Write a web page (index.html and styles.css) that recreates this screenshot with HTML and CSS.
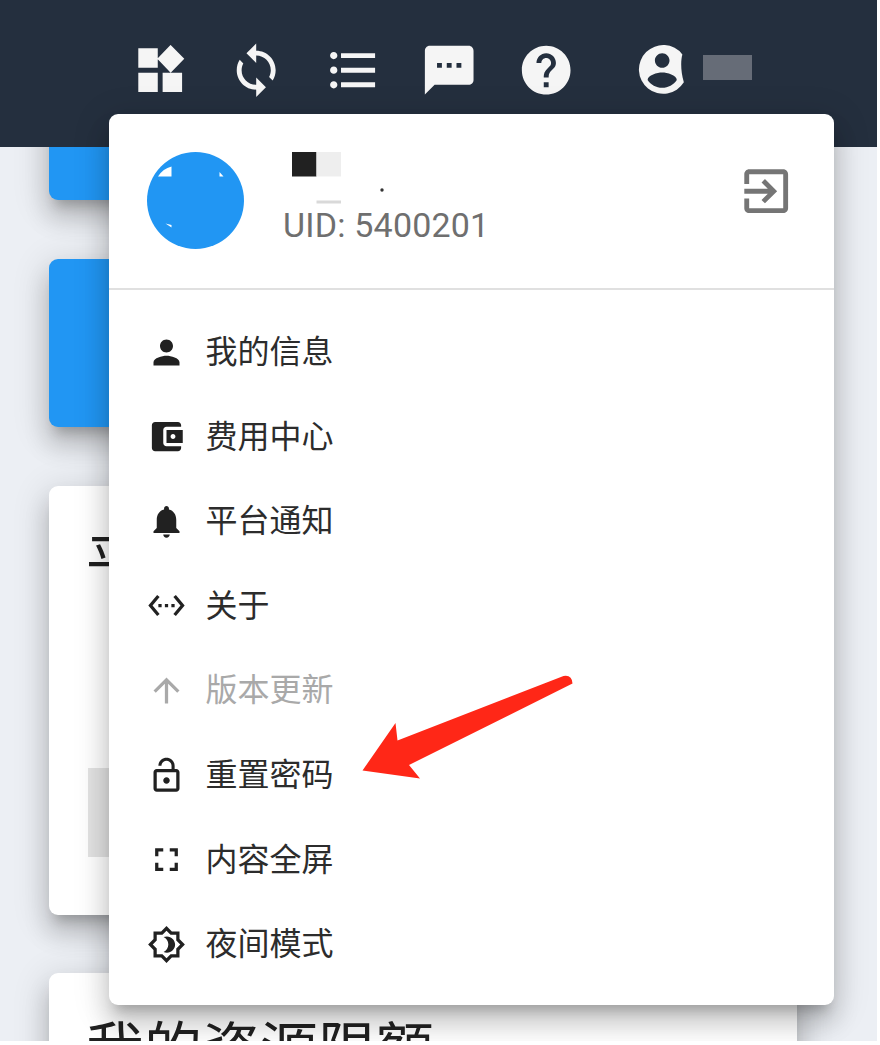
FILE: index.html
```html
<!DOCTYPE html>
<html lang="zh-CN">
<head>
<meta charset="utf-8">
<title>账户菜单</title>
<link rel="stylesheet" href="styles.css">
</head>
<body>
<div class="app">
  <header class="topbar">
    <nav class="actions">
      <svg class="icon" viewBox="0 0 24 24"><path d="M13 13v8h8v-8h-8zM3 21h8v-8H3v8zM3 3v8h8V3H3zm13.220-1.310L10.800 7.340 16.300 13l5.600-5.660-5.600-5.650z"/></svg>
      <svg class="icon" viewBox="0 0 24 24"><path d="M12 4V1L8 5l4 4V6c3.310 0 6 2.690 6 6 0 1.010-.250 1.970-.7 2.800l1.460 1.460C19.540 15.030 20 13.570 20 12c0-4.420-3.580-8-8-8zm0 14c-3.310 0-6-2.690-6-6 0-1.010.250-1.970.7-2.800L5.240 7.740C4.460 8.970 4 10.430 4 12c0 4.420 3.580 8 8 8v3l4-4-4-4v3z"/></svg>
      <svg class="icon" viewBox="0 0 24 24"><path d="M4 10.500c-.830 0-1.500.670-1.500 1.500s.670 1.500 1.500 1.500 1.500-.670 1.500-1.500-.670-1.500-1.500-1.500zm0-6c-.830 0-1.500.670-1.500 1.500S3.170 7.500 4 7.500 5.500 6.830 5.500 6 4.830 4.500 4 4.500zm0 12c-.830 0-1.500.680-1.500 1.500s.680 1.500 1.500 1.500 1.500-.680 1.500-1.500-.670-1.500-1.500-1.500zM7 19h14v-2H7v2zm0-6h14v-2H7v2zm0-8v2h14V5H7z"/></svg>
      <svg class="icon" viewBox="0 0 24 24"><path d="M20 2H4c-1.100 0-1.990.9-1.990 2L2 22l4-4h14c1.100 0 2-.9 2-2V4c0-1.100-.9-2-2-2zM9 11H7V9h2v2zm4 0h-2V9h2v2zm4 0h-2V9h2v2z"/></svg>
      <svg class="icon" viewBox="0 0 24 24"><path d="M12 2C6.480 2 2 6.480 2 12s4.480 10 10 10 10-4.480 10-10S17.520 2 12 2zm1 17h-2v-2h2v2zm2.070-7.750l-.9.920C13.450 12.900 13 13.500 13 15h-2v-.5c0-1.100.450-2.100 1.170-2.830l1.240-1.260c.370-.360.590-.860.590-1.410 0-1.100-.9-2-2-2s-2 .9-2 2H8c0-2.210 1.790-4 4-4s4 1.790 4 4c0 .880-.360 1.680-.930 2.250z"/></svg>
    </nav>
    <div class="account">
      <svg class="icon" viewBox="0 0 24 24"><path d="M20.300 5.500C19.550 8 19.600 12.500 20.900 17A10 10 0 1 1 20.300 5.500zM12 5c-1.660 0-3 1.340-3 3s1.340 3 3 3 3-1.340 3-3-1.340-3-3-3zm0 14.200c2.500 0 4.710-1.280 6-3.220-.03-1.990-4.010-3.080-6-3.080-2 0-5.970 1.090-6 3.080 1.290 1.940 3.500 3.220 6 3.220z" fill-rule="evenodd"/></svg>
      <span class="account-name"></span>
    </div>
  </header>

  <main class="page">
    <section class="card card-blue card-first"></section>
    <section class="card card-blue card-second"></section>
    <section class="card card-news">
      <h2 class="card-title">平</h2>
      <div class="card-block"></div>
    </section>
    <section class="card card-quota">
      <h2 class="card-title">我的资源限额</h2>
    </section>
  </main>

  <div class="menu">
    <div class="profile">
      <svg class="avatar" viewBox="0 0 97 97"><circle cx="48.500" cy="48.500" r="48.500" fill="#2196f3"/><path d="M11 24.500Q16 16.500 24.500 14.500V24.500zM72.500 20L76.500 24.500H72.500zM18.500 71.500L24.500 73V75.500z" fill="#fff"/></svg>
      <div class="identity">
        <div class="name">
          <svg class="name-mask" viewBox="0 0 110 56"><path fill="#212121" d="M9 2h24.500v24.500H9z"/><path fill="#eee" d="M33.500 2H58v24.500H33.500z"/><path fill="#d9d9d9" d="M33.500 50.500H58v3H33.500z"/><circle cx="99" cy="40" r="1.700" fill="#333"/></svg>
        </div>
        <div class="uid">UID: 5400201</div>
      </div>
      <svg class="icon logout" viewBox="0 0 24 24"><path d="M10.090 15.590L11.500 17l5-5-5-5-1.410 1.410L12.670 11H3v2h9.670l-2.580 2.590zM19 3H5c-1.110 0-2 .9-2 2v4h2V5h14v14H5v-4H3v4c0 1.100.890 2 2 2h14c1.100 0 2-.9 2-2V5c0-1.100-.9-2-2-2z"/></svg>
    </div>
    <ul class="items">
      <li class="item"><svg viewBox="0 0 24 24"><path d="M12 12c2.210 0 4-1.790 4-4s-1.790-4-4-4-4 1.790-4 4 1.790 4 4 4zm0 2c-2.670 0-8 1.340-8 4v2h16v-2c0-2.660-5.330-4-8-4z"/></svg><span>我的信息</span></li>
      <li class="item"><svg viewBox="0 0 24 24"><path d="M21 18v1c0 1.100-.9 2-2 2H5c-1.110 0-2-.9-2-2V5c0-1.100.890-2 2-2h14c1.100 0 2 .9 2 2v1h-9c-1.110 0-2 .9-2 2v8c0 1.100.890 2 2 2h9zm-9-2h10V8H12v8zm4-2.500c-.830 0-1.500-.670-1.500-1.500s.670-1.500 1.500-1.500 1.500.670 1.500 1.500-.670 1.500-1.500 1.500z"/></svg><span>费用中心</span></li>
      <li class="item"><svg viewBox="0 0 24 24"><path d="M12 22c1.100 0 2-.9 2-2h-4c0 1.100.890 2 2 2zm6-6v-5c0-3.070-1.640-5.640-4.500-6.320V4c0-.830-.670-1.500-1.500-1.500s-1.500.670-1.500 1.500v.680C7.630 5.360 6 7.920 6 11v5l-2 2v1h16v-1l-2-2z"/></svg><span>平台通知</span></li>
      <li class="item"><svg viewBox="0 0 24 24"><path d="M7.770 6.760L6.230 5.480.820 12l5.410 6.520 1.540-1.280L3.420 12l4.350-5.240zM7 13h2v-2H7v2zm10-2h-2v2h2v-2zm-6 2h2v-2h-2v2zm6.770-7.520l-1.540 1.280L20.580 12l-4.350 5.240 1.540 1.280L23.180 12l-5.410-6.520z"/></svg><span>关于</span></li>
      <li class="item disabled"><svg viewBox="0 0 24 24"><path d="M4 12l1.410 1.410L11 7.830V20h2V7.830l5.580 5.590L20 12l-8-8-8 8z"/></svg><span>版本更新</span></li>
      <li class="item"><svg viewBox="0 0 24 24"><path d="M12 17c1.100 0 2-.9 2-2s-.9-2-2-2-2 .9-2 2 .9 2 2 2zm6-9h-1V6c0-2.760-2.240-5-5-5S7 3.240 7 6h1.900c0-1.710 1.390-3.100 3.100-3.100 1.710 0 3.100 1.390 3.100 3.100v2H6c-1.100 0-2 .9-2 2v10c0 1.100.9 2 2 2h12c1.100 0 2-.9 2-2V10c0-1.100-.9-2-2-2zm0 12H6V10h12v10z"/></svg><span>重置密码</span></li>
      <li class="item"><svg viewBox="0 0 24 24"><path d="M7 14H5v5h5v-2H7v-3zm-2-4h2V7h3V5H5v5zm12 7h-3v2h5v-5h-2v3zM14 5v2h3v3h2V5h-5z"/></svg><span>内容全屏</span></li>
      <li class="item"><svg viewBox="0 0 24 24"><path d="M20 8.690V4h-4.690L12 .690 8.690 4H4v4.690L.690 12 4 15.310V20h4.690L12 23.310 15.310 20H20v-4.690L23.310 12 20 8.690zm-2 5.790V18h-3.520L12 20.480 9.520 18H6v-3.520L3.520 12 6 9.520V6h3.520L12 3.520 14.480 6H18v3.520L20.480 12 18 14.480zM12.290 7c-.740 0-1.450.170-2.080.460 1.720.790 2.920 2.530 2.920 4.540s-1.200 3.750-2.920 4.540c.630.290 1.340.460 2.080.460 2.760 0 5-2.240 5-5s-2.240-5-5-5z"/></svg><span>夜间模式</span></li>
    </ul>
    <svg class="pointer" viewBox="0 0 212 106"><path d="M.500 95.500L33.500 48L35.500 65.500L201.500 1Q210-.500 210.500 8.500L47 90L58 103.500z"/></svg>
  </div>
</div>
</body>
</html>
```
FILE: styles.css
```css
* { box-sizing: border-box; }

body {
  margin: 0;
  background: #fff;
  font-family: Roboto, "Noto Sans CJK SC", sans-serif;
}

.app {
  position: relative;
  width: 877px;
  height: 1041px;
  overflow: hidden;
  background: #eceff4;
}

svg { display: block; flex: none; }
.icon { width: 58.4px; height: 58.4px; fill: #f5f5f5; }

.topbar {
  position: relative;
  z-index: 1;
  display: flex;
  align-items: center;
  height: 147px;
  padding: 0 0 7.500px 130.500px;
  background: #242f3e;
}
.actions { display: flex; gap: 38.250px; }
.account { display: flex; align-items: center; margin-left: 57.200px; }
.account-name { width: 49px; height: 25px; margin: -4px 0 0 12px; background: #666c77; }

.page {
  display: flex;
  flex-direction: column;
  gap: 58.500px;
  width: 748px;
  margin: -60.500px 0 0 49px;
}
.card {
  flex: none;
  padding: 0 39px;
  border-radius: 9px;
  background: #fff;
  color: #212121;
  box-shadow: 0 12px 12px -7px rgba(0, 0, 0, .2), 0 19px 24px 2px rgba(0, 0, 0, .14), 0 7px 34px 5px rgba(0, 0, 0, .12);
}
.card-blue { background: #2196f3; }
.card-first { height: 113.500px; }
.card-second { height: 168.500px; }
.card-news { height: 429px; padding-top: 36px; }
.card-quota { height: 300px; padding-top: 37px; }
.card-title { margin: 0 0 0 -2px; font-size: 58px; line-height: 80px; font-weight: 400; }
.card-block { height: 89px; margin-top: 166px; background: #e4e4e4; }

.menu {
  position: absolute;
  z-index: 2;
  top: 113.500px;
  left: 109px;
  width: 724.500px;
  height: 891px;
  border-radius: 9px;
  background: #fff;
  box-shadow: 0 12px 12px -7px rgba(0, 0, 0, .2), 0 19px 24px 2px rgba(0, 0, 0, .14), 0 7px 34px 5px rgba(0, 0, 0, .12);
}
.profile {
  display: flex;
  align-items: flex-start;
  height: 176.500px;
  padding: 38.500px 38px 0;
  border-bottom: 2.400px solid #e0e0e0;
}
.avatar { width: 97px; height: 97px; }
.identity { flex: 1; margin-left: 39px; }
.name { height: 52px; margin-top: -2px; }
.name-mask { width: 110px; height: 56px; }
.uid { color: #6f6f6f; font-size: 34px; line-height: 46px; letter-spacing: .2px; }
.logout { margin-top: 9.500px; fill: #757575; }

.items { margin: 0; padding: 20px 0 0 38px; list-style: none; }
.item {
  display: flex;
  align-items: center;
  height: 84.550px;
  color: #212121;
  font-size: 32px;
  line-height: 46px;
}
.item svg { width: 39px; height: 39px; margin-right: 20px; fill: currentColor; }
.item span { margin-left: -.5px; color: #2c2c2c; }
.disabled, .item.disabled span { color: #a9a9a9; }

.pointer {
  position: absolute;
  top: 561px;
  left: 253px;
  width: 212px;
  height: 106px;
  fill: #ff2717;
}
```
